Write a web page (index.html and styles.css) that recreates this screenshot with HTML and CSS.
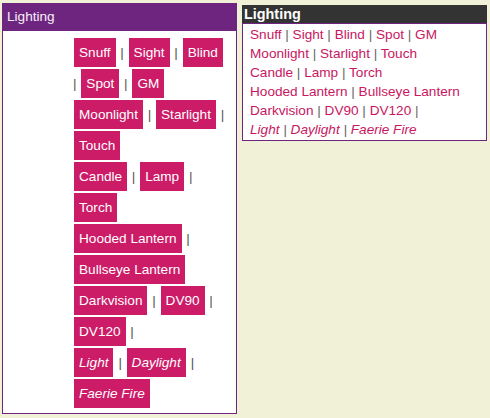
FILE: index.html
```html
<!DOCTYPE html>
<html>
<head>
  <title>Lighting</title>
  <link rel="stylesheet" href="styles.css">
</head>
<body>
  <div class="page">
    <div class="picker">
      <div class="picker-title">Lighting</div>
      <div class="picker-body">
        <div class="group">
          <a class="light-button">Snuff</a> | <a class="light-button">Sight</a> | <a class="light-button">Blind</a> | <a class="light-button">Spot</a> | <a class="light-button">GM</a>
        </div>
        <div class="group">
          <a class="light-button">Moonlight</a> | <a class="light-button">Starlight</a> | <a class="light-button">Touch</a>
        </div>
        <div class="group">
          <a class="light-button">Candle</a> | <a class="light-button">Lamp</a> | <a class="light-button">Torch</a>
        </div>
        <div class="group">
          <a class="light-button">Hooded Lantern</a> | <a class="light-button">Bullseye Lantern</a>
        </div>
        <div class="group">
          <a class="light-button">Darkvision</a> | <a class="light-button">DV90</a> | <a class="light-button">DV120</a> |
        </div>
        <div class="group italic">
          <a class="light-button">Light</a> | <a class="light-button">Daylight</a> | <a class="light-button">Faerie Fire</a>
        </div>
      </div>
    </div>

    <div class="menu">
      <div class="menu-title">Lighting</div>
      <div class="menu-body">
        <div class="group">
          <a class="light-link">Snuff</a> | <a class="light-link">Sight</a> | <a class="light-link">Blind</a> | <a class="light-link">Spot</a> | <a class="light-link">GM</a>
        </div>
        <div class="group">
          <a class="light-link">Moonlight</a> | <a class="light-link">Starlight</a> | <a class="light-link">Touch</a>
        </div>
        <div class="group">
          <a class="light-link">Candle</a> | <a class="light-link">Lamp</a> | <a class="light-link">Torch</a>
        </div>
        <div class="group">
          <a class="light-link">Hooded Lantern</a> | <a class="light-link">Bullseye Lantern</a>
        </div>
        <div class="group">
          <a class="light-link">Darkvision</a> | <a class="light-link">DV90</a> | <a class="light-link">DV120</a> |
        </div>
        <div class="group italic">
          <a class="light-link">Light</a> | <a class="light-link">Daylight</a> | <a class="light-link">Faerie Fire</a>
        </div>
      </div>
    </div>
  </div>
</body>
</html>
```

FILE: styles.css
```css
/* Lighting pickers */
body {
  margin: 0;
  background-color: #F0F1D7;
  font-family: "Liberation Sans", Arial, Helvetica, sans-serif;
  font-size: 13.6px;
  line-height: 19px;
}

.page {
  display: flex;
  align-items: flex-start;
  gap: 5px;
  padding-left: 2px;
}

.italic {
  font-style: italic;
}

/* button panel */
.picker {
  width: 235px;
  margin-top: 3px;
  box-sizing: border-box;
  border: 1px solid #6E2580;
  border-top: none;
  background-color: #FFFFFF;
}

.picker-title {
  background-color: #6E2580;
  color: #F6F0F8;
  padding: 5px 4px 5px 4px;
  line-height: 18px;
}

.picker-body {
  padding: 6px 8px 4px 70px;
  color: #555;
}

.light-button {
  display: inline-block;
  margin: 1px 1px;
  padding: 5px;
  background-color: #CC1B67;
  color: #FFFFFF;
  line-height: 19px;
  cursor: pointer;
}

/* link panel */
.menu {
  width: 245px;
  margin-top: 5px;
}

.menu-title {
  background-color: #333333;
  color: #FFFFFF;
  font-weight: bold;
  font-size: 14.4px;
  line-height: 18px;
  padding: 0 2px;
}

.menu-body {
  background-color: #FFFFFF;
  border: 1px solid #6E2580;
  padding: 1px 6px 1px 7px;
  color: #666;
}

.light-link {
  color: #C8175F;
  cursor: pointer;
}
```
